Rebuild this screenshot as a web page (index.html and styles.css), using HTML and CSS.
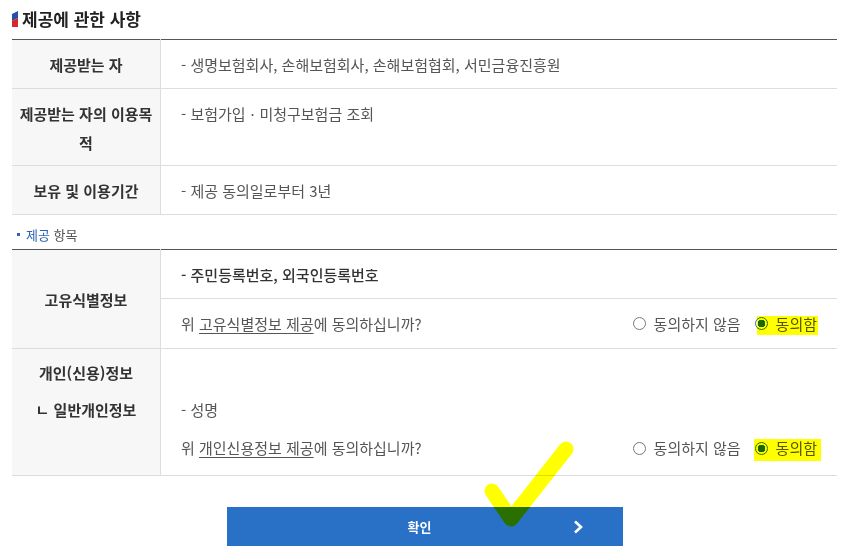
FILE: index.html
```html
<!DOCTYPE html>
<html lang="ko">
<head>
  <meta charset="UTF-8">
  <title>제공에 관한 사항</title>
  <link rel="stylesheet" href="styles.css">
</head>
<body>
  <div class="wrap">
    <h3 class="tit">
      <svg class="tit-ico" width="6" height="16" viewBox="0 0 6 16">
        <polygon points="0,3 6,0 6,7 0,10" fill="#2450a8"/>
        <polygon points="0,10 6,7 6,16 0,16" fill="#d7262e"/>
      </svg>
      제공에 관한 사항
    </h3>

    <table class="tbl">
      <tr>
        <th>제공받는 자</th>
        <td>- 생명보험회사, 손해보험회사, 손해보험협회, 서민금융진흥원</td>
      </tr>
      <tr class="two">
        <th>제공받는 자의 이용목적</th>
        <td class="top">- 보험가입ㆍ미청구보험금 조회</td>
      </tr>
      <tr>
        <th>보유 및 이용기간</th>
        <td>- 제공 동의일로부터 3년</td>
      </tr>
    </table>

    <p class="sub"><span class="blue">제공</span> 항목</p>

    <table class="tbl">
      <tr>
        <th rowspan="2">고유식별정보</th>
        <td class="strong">- 주민등록번호, 외국인등록번호</td>
      </tr>
      <tr>
        <td class="agree">
          <div class="ask">
            <span>위 <u>고유식별정보 제공</u>에 동의하십니까?</span>
            <span class="opts">
              <label class="opt"><span class="rd"></span>동의하지 않음</label>
              <label class="opt on"><span class="rd"></span>동의함</label>
            </span>
          </div>
        </td>
      </tr>
      <tr class="multi">
        <th>개인(신용)정보<br>ㄴ 일반개인정보</th>
        <td>
          <div>- 성명</div>
          <div class="ask">
            <span>위 <u>개인신용정보 제공</u>에 동의하십니까?</span>
            <span class="opts">
              <label class="opt"><span class="rd"></span>동의하지 않음</label>
              <label class="opt on wide"><span class="rd"></span>동의함</label>
            </span>
          </div>
        </td>
      </tr>
    </table>

    <div class="btn-area">
      <button class="btn-ok">
        <span class="btn-txt">확인</span>
        <svg width="10" height="14" viewBox="0 0 10 14">
          <path d="M2 1.5 L8 7 L2 12.5" fill="none" stroke="#fff" stroke-width="2.6"/>
        </svg>
      </button>
    </div>
  </div>

  <!-- 형광펜 체크 표시 -->
  <svg class="check" width="110" height="110" viewBox="0 0 110 110">
    <path d="M22 61 L41 89 L96 19" fill="none" stroke="#ffff00" stroke-width="15" stroke-linecap="round" stroke-linejoin="round"/>
  </svg>
</body>
</html>
```

FILE: styles.css
```css
body {
  margin: 0;
  font-family: "Noto Sans CJK KR", "Noto Sans", sans-serif;
  font-size: 15px;
  color: #555;
  background: #fff;
}
.wrap {
  margin: 0 5px 0 12px;
  padding-top: 7px;
}
.tit {
  display: flex;
  align-items: center;
  gap: 4px;
  margin: 0 0 8px;
  font-size: 17px;
  line-height: 24px;
  color: #222;
}
.tbl {
  width: 100%;
  border-collapse: collapse;
  border-top: 1px solid #555;
}
.tbl th {
  width: 136px;
  padding: 10px 6px 9px;
  background: #f7f7f7;
  color: #333;
  font-weight: bold;
  line-height: 29px;
  text-align: center;
  border-bottom: 1px solid #ddd;
  border-right: 1px solid #ddd;
}
.tbl td {
  padding: 10px 20px 9px;
  line-height: 29px;
  border-bottom: 1px solid #ddd;
}
.tbl tr.two th,
.tbl tr.two td {
  padding-bottom: 8px;
}
.tbl td.top {
  vertical-align: top;
}
.tbl td.strong {
  color: #333;
  font-weight: 500;
}
.tbl td.agree {
  padding-bottom: 10px;
}
.sub {
  margin: 0;
  padding: 11px 0 5px 5px;
  font-size: 13px;
  line-height: 18px;
  color: #555;
}
.sub::before {
  content: "";
  display: inline-block;
  width: 3px;
  height: 3px;
  margin: 0 6px 3px 0;
  background: #2f64b4;
  vertical-align: middle;
}
.blue {
  color: #2f64b4;
}
.ask {
  display: flex;
  justify-content: space-between;
  align-items: center;
}
.ask u {
  text-underline-offset: 3px;
}
.opts {
  display: flex;
  gap: 14px;
}
.opt {
  position: relative;
  display: flex;
  align-items: center;
  gap: 8px;
  line-height: 20px;
}
.rd {
  box-sizing: border-box;
  width: 13px;
  height: 13px;
  border: 1px solid #777;
  border-radius: 50%;
  background: #fff;
}
.opt.on .rd {
  border-color: #2a6fd0;
  background: radial-gradient(circle, #1c68c8 3.6px, #fff 4px);
}
.opt.on::after {
  content: "";
  position: absolute;
  top: 2px;
  bottom: -1px;
  left: 2px;
  right: -1px;
  background: #ffff00;
  mix-blend-mode: multiply;
}
.opt.on.wide::after {
  top: 1px;
  bottom: -3px;
  left: -1px;
  right: -4px;
}
.tbl tr.multi th {
  vertical-align: top;
  padding: 5px 6px 0;
  line-height: 37px;
}
.tbl tr.multi td {
  padding: 42px 20px 8px;
  line-height: 38px;
}
.btn-area {
  display: flex;
  justify-content: center;
  margin-top: 31px;
}
.btn-ok {
  display: flex;
  align-items: center;
  width: 396px;
  height: 39px;
  padding: 0 40px;
  border: none;
  background: #2970c7;
  color: #fff;
  font-family: inherit;
  font-size: 13px;
  font-weight: bold;
  cursor: pointer;
}
.btn-txt {
  flex: 1;
  text-align: center;
}
.check {
  position: absolute;
  left: 470px;
  top: 430px;
  mix-blend-mode: multiply;
}
```
